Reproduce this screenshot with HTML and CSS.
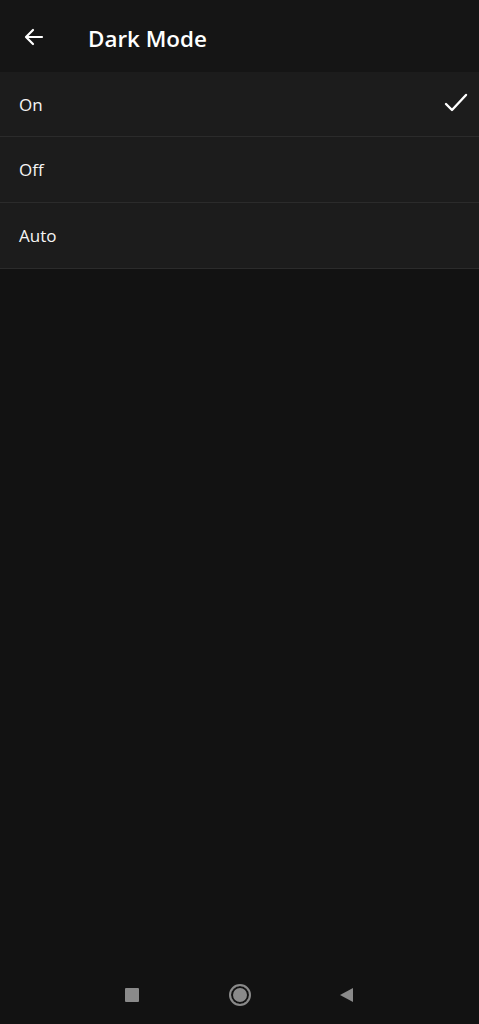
FILE: index.html
```html
<!DOCTYPE html>
<html lang="en">

<head>
  <meta charset="UTF-8">
  <meta name="viewport" content="width=device-width, initial-scale=1.0">
  <title>Dark Mode</title>
  <link rel="stylesheet" href="styles.css">
</head>

<body>
  <header class="topbar">
    <button class="back" aria-label="Back">
      <svg width="24" height="24" viewBox="0 0 24 24">
        <path d="M20 12H5M11 5l-7 7 7 7" fill="none" stroke="#fff" stroke-width="2.2" stroke-linecap="round" stroke-linejoin="round" />
      </svg>
    </button>
    <h1 class="title">Dark Mode</h1>
  </header>

  <ul class="options">
    <li class="option">
      <span>On</span>
      <svg class="check" width="26" height="26" viewBox="0 0 26 26">
        <path d="M3 14l6 6L23 5" fill="none" stroke="#fff" stroke-width="2.4" stroke-linecap="round" stroke-linejoin="round" />
      </svg>
    </li>
    <li class="option"><span>Off</span></li>
    <li class="option"><span>Auto</span></li>
  </ul>

  <div class="spacer"></div>

  <!-- tombol navigasi sistem -->
  <nav class="navbar">
    <span class="nav-square"></span>
    <span class="nav-home"></span>
    <svg class="nav-back" width="16" height="16" viewBox="0 0 16 16">
      <path d="M14 1L1 8l13 7z" fill="#8a8a8a" />
    </svg>
  </nav>
</body>

</html>
```

FILE: styles.css
```css
* {
  margin: 0;
  padding: 0;
  box-sizing: border-box;
}

body {
  width: 479px;
  height: 1024px;
  background: #121212;
  color: #f5f5f5;
  font-family: "Open Sans", "Noto Sans", sans-serif;
  display: flex;
  flex-direction: column;
}

.topbar {
  height: 72px;
  background: #151515;
  display: flex;
  align-items: center;
  padding-left: 22px;
}

.back {
  background: none;
  border: none;
  width: 24px;
  height: 24px;
  display: flex;
  margin-top: 2px;
}

.title {
  font-size: 22.4px;
  font-weight: 600;
  margin-left: 42px;
  margin-top: 5px;
  color: #fff;
}

.options {
  list-style: none;
}

.option {
  height: 66px;
  background: #1c1c1c;
  border-bottom: 1px solid #2b2b2b;
  display: flex;
  align-items: center;
  justify-content: space-between;
  padding: 0 10px 0 19px;
  font-size: 17px;
}

.option:first-child {
  height: 65px;
}

.check {
  margin-top: -2px;
}

.spacer {
  flex: 1;
}

.navbar {
  height: 58px;
  display: flex;
  align-items: center;
  justify-content: center;
  gap: 88px;
}

.nav-square {
  width: 14px;
  height: 14px;
  margin-right: 2px;
  background: #8a8a8a;
  border-radius: 1px;
}

.nav-home {
  width: 22px;
  height: 22px;
  border: 2px solid #8a8a8a;
  border-radius: 50%;
  box-shadow: inset 0 0 0 2px #121212, inset 0 0 0 9px #8a8a8a;
}
```
